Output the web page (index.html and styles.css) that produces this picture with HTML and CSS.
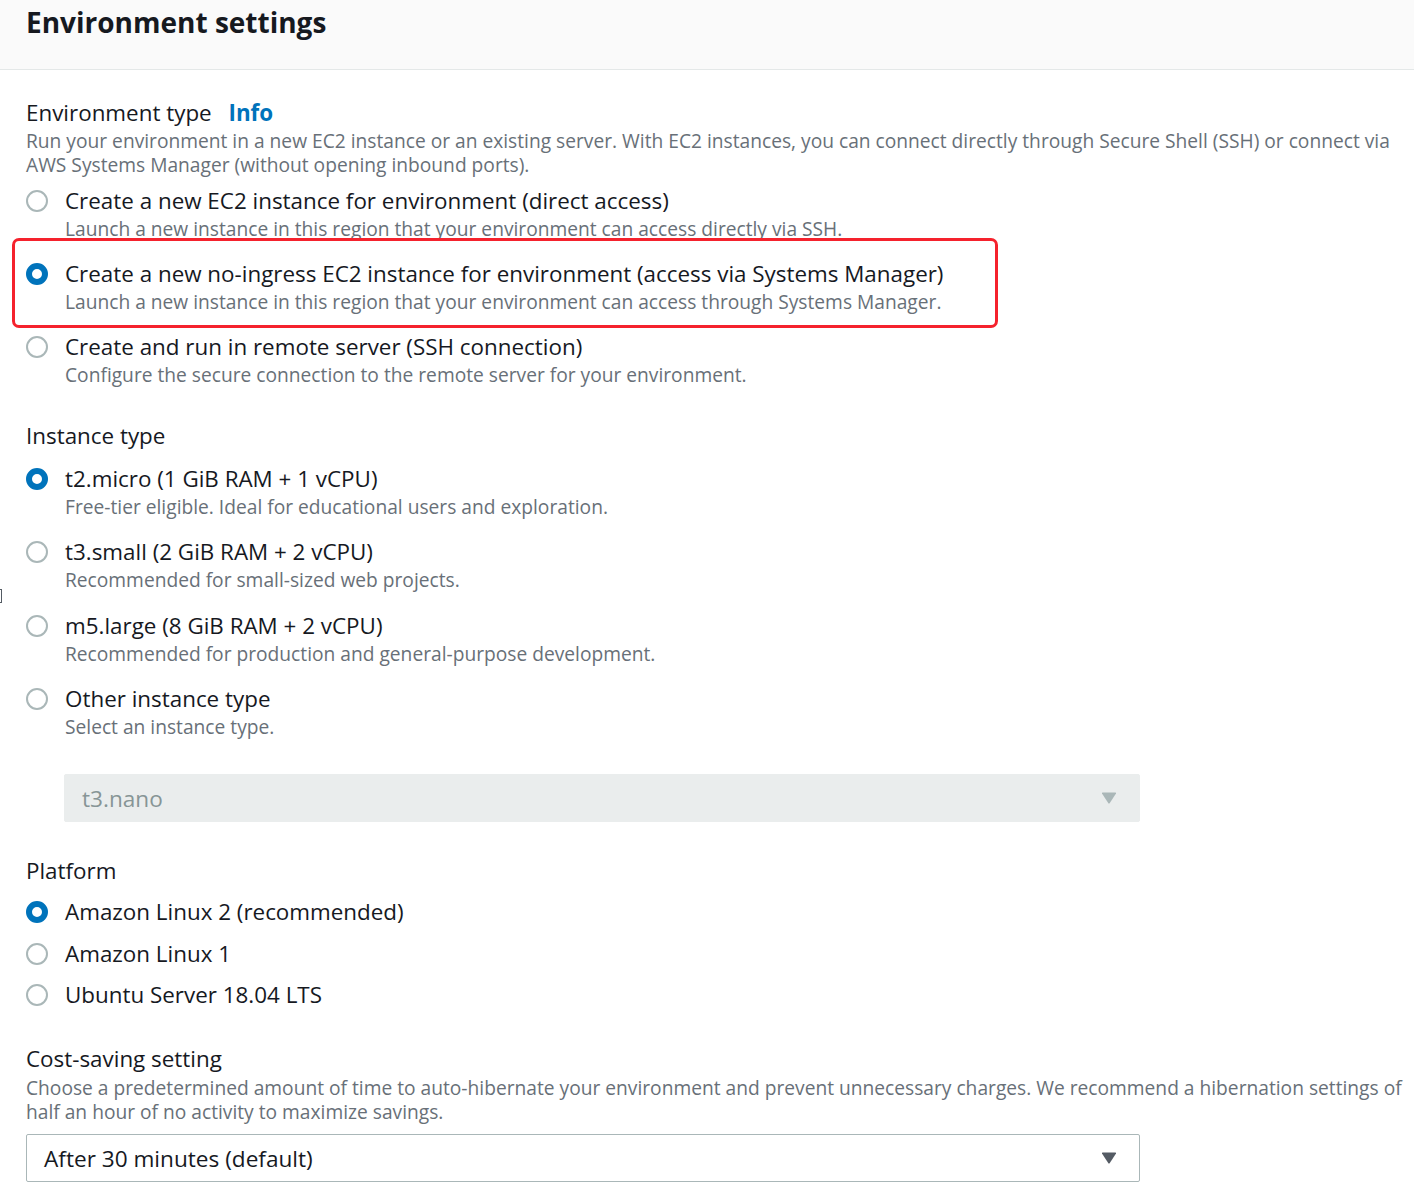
FILE: index.html
```html
<!DOCTYPE html>
<html lang="en">
<head>
<meta charset="utf-8">
<title>Environment settings</title>
<link rel="stylesheet" href="styles.css">
</head>
<body>
<div class="panel-header">
  <h2 class="panel-title">Environment settings</h2>
</div>
<div class="panel-body">
  <section class="field">
    <div class="field-label">Environment type <a class="info-link">Info</a></div>
    <div class="field-desc">Run your environment in a new EC2 instance or an existing server. With EC2 instances, you can connect directly through Secure Shell (SSH) or connect via AWS Systems Manager (without opening inbound ports).</div>
    <div class="radio-group">
      <div class="radio-option">
        <span class="radio"></span>
        <div class="radio-text">
          <div class="radio-label">Create a new EC2 instance for environment (direct access)</div>
          <div class="radio-desc">Launch a new instance in this region that your environment can access directly via SSH.</div>
        </div>
      </div>
      <div class="radio-option highlighted">
        <span class="radio checked"></span>
        <div class="radio-text">
          <div class="radio-label">Create a new no-ingress EC2 instance for environment (access via Systems Manager)</div>
          <div class="radio-desc">Launch a new instance in this region that your environment can access through Systems Manager.</div>
        </div>
      </div>
      <div class="radio-option">
        <span class="radio"></span>
        <div class="radio-text">
          <div class="radio-label">Create and run in remote server (SSH connection)</div>
          <div class="radio-desc">Configure the secure connection to the remote server for your environment.</div>
        </div>
      </div>
    </div>
  </section>

  <section class="field">
    <div class="field-label">Instance type</div>
    <div class="radio-group">
      <div class="radio-option">
        <span class="radio checked"></span>
        <div class="radio-text">
          <div class="radio-label">t2.micro (1 GiB RAM + 1 vCPU)</div>
          <div class="radio-desc">Free-tier eligible. Ideal for educational users and exploration.</div>
        </div>
      </div>
      <div class="radio-option">
        <span class="radio"></span>
        <div class="radio-text">
          <div class="radio-label">t3.small (2 GiB RAM + 2 vCPU)</div>
          <div class="radio-desc">Recommended for small-sized web projects.</div>
        </div>
      </div>
      <div class="radio-option">
        <span class="radio"></span>
        <div class="radio-text">
          <div class="radio-label">m5.large (8 GiB RAM + 2 vCPU)</div>
          <div class="radio-desc">Recommended for production and general-purpose development.</div>
        </div>
      </div>
      <div class="radio-option">
        <span class="radio"></span>
        <div class="radio-text">
          <div class="radio-label">Other instance type</div>
          <div class="radio-desc">Select an instance type.</div>
        </div>
      </div>
    </div>
    <div class="select disabled indented">
      <span class="select-value">t3.nano</span>
      <svg class="caret" width="16" height="12" viewBox="0 0 16 12"><path d="M1 1.5 Q0.6 0.5 1.8 0.5 H14.2 Q15.4 0.5 15 1.5 L8.8 11 Q8 12 7.2 11 Z"/></svg>
    </div>
  </section>

  <section class="field">
    <div class="field-label">Platform</div>
    <div class="radio-group compact">
      <div class="radio-option">
        <span class="radio checked"></span>
        <div class="radio-text"><div class="radio-label">Amazon Linux 2 (recommended)</div></div>
      </div>
      <div class="radio-option">
        <span class="radio"></span>
        <div class="radio-text"><div class="radio-label">Amazon Linux 1</div></div>
      </div>
      <div class="radio-option">
        <span class="radio"></span>
        <div class="radio-text"><div class="radio-label">Ubuntu Server 18.04 LTS</div></div>
      </div>
    </div>
  </section>

  <section class="field">
    <div class="field-label">Cost-saving setting</div>
    <div class="field-desc spaced">Choose a predetermined amount of time to auto-hibernate your environment and prevent unnecessary charges. We recommend a hibernation settings of half an hour of no activity to maximize savings.</div>
    <div class="select">
      <span class="select-value">After 30 minutes (default)</span>
      <svg class="caret" width="16" height="12" viewBox="0 0 16 12"><path d="M1 1.5 Q0.6 0.5 1.8 0.5 H14.2 Q15.4 0.5 15 1.5 L8.8 11 Q8 12 7.2 11 Z"/></svg>
    </div>
  </section>
</div>
<span class="edge-mark"></span>
</body>
</html>
```

FILE: styles.css
```css
html, body {
  margin: 0;
  padding: 0;
  background: #ffffff;
}

body {
  font-family: "Open Sans", "Noto Sans", sans-serif;
  color: #16191f;
  position: relative;
  width: 1414px;
  height: 1196px;
  overflow: hidden;
}

.panel-header {
  background: #fafafa;
  border-bottom: 1px solid #e4e8e8;
  height: 70px;
  padding: 0 26px;
  box-sizing: border-box;
}

.panel-title {
  margin: 0;
  padding-top: 4px;
  font-size: 28px;
  font-weight: 700;
  line-height: 36px;
}

.panel-body {
  padding: 28px 8px 0 26px;
}

.field {
  margin-bottom: 34px;
}

.field-label {
  font-size: 22.4px;
  line-height: 30px;
}

.info-link {
  color: #0073bb;
  font-weight: 700;
  margin-left: 11px;
}

.field-desc {
  font-size: 19.2px;
  line-height: 24px;
  margin-top: 1px;
  color: #687078;
}

.field-desc.spaced {
  margin-top: 2px;
}

.radio-group {
  display: flex;
  flex-direction: column;
  gap: 18.4px;
  margin-top: 13px;
}

.field-desc + .radio-group {
  margin-top: 9px;
  gap: 18px;
}

.radio-group.compact {
  gap: 11.5px;
  margin-top: 11px;
  margin-bottom: 7px;
}

.radio-option {
  display: flex;
  align-items: flex-start;
  gap: 17px;
  position: relative;
}

.radio {
  flex: none;
  width: 22px;
  height: 22px;
  box-sizing: border-box;
  border: 2px solid #aab7b8;
  border-radius: 50%;
  margin-top: 4px;
  background: #fff;
}

.radio.checked {
  border: 6px solid #0073bb;
}

.radio-label {
  font-size: 22.4px;
  line-height: 30px;
}

.radio-desc {
  font-size: 19.2px;
  line-height: 24px;
  margin-top: 1px;
  color: #687078;
}

.highlighted::after {
  content: "";
  position: absolute;
  left: -14px;
  top: -21px;
  width: 986px;
  height: 90px;
  box-sizing: border-box;
  border: 3px solid #f5222d;
  border-radius: 7px;
  pointer-events: none;
}

.select {
  display: flex;
  align-items: center;
  justify-content: space-between;
  width: 1114px;
  height: 48px;
  box-sizing: border-box;
  border: 1px solid #aab7b8;
  border-radius: 2px;
  padding: 0 22px 0 17px;
  margin-top: 10px;
}

.select-value {
  font-size: 22.6px;
}

.caret {
  fill: #545b64;
}

.select.disabled {
  background: #eaeded;
  border-color: #eaeded;
  margin-top: 35px;
  width: 1076px;
}

.select.disabled .select-value {
  color: #879596;
}

.select.disabled .caret {
  fill: #aab7b8;
}

.indented {
  margin-left: 38px;
}

.edge-mark {
  position: absolute;
  left: -4px;
  top: 589px;
  width: 6px;
  height: 14px;
  border: 1px solid #545b64;
  box-sizing: border-box;
}
```
